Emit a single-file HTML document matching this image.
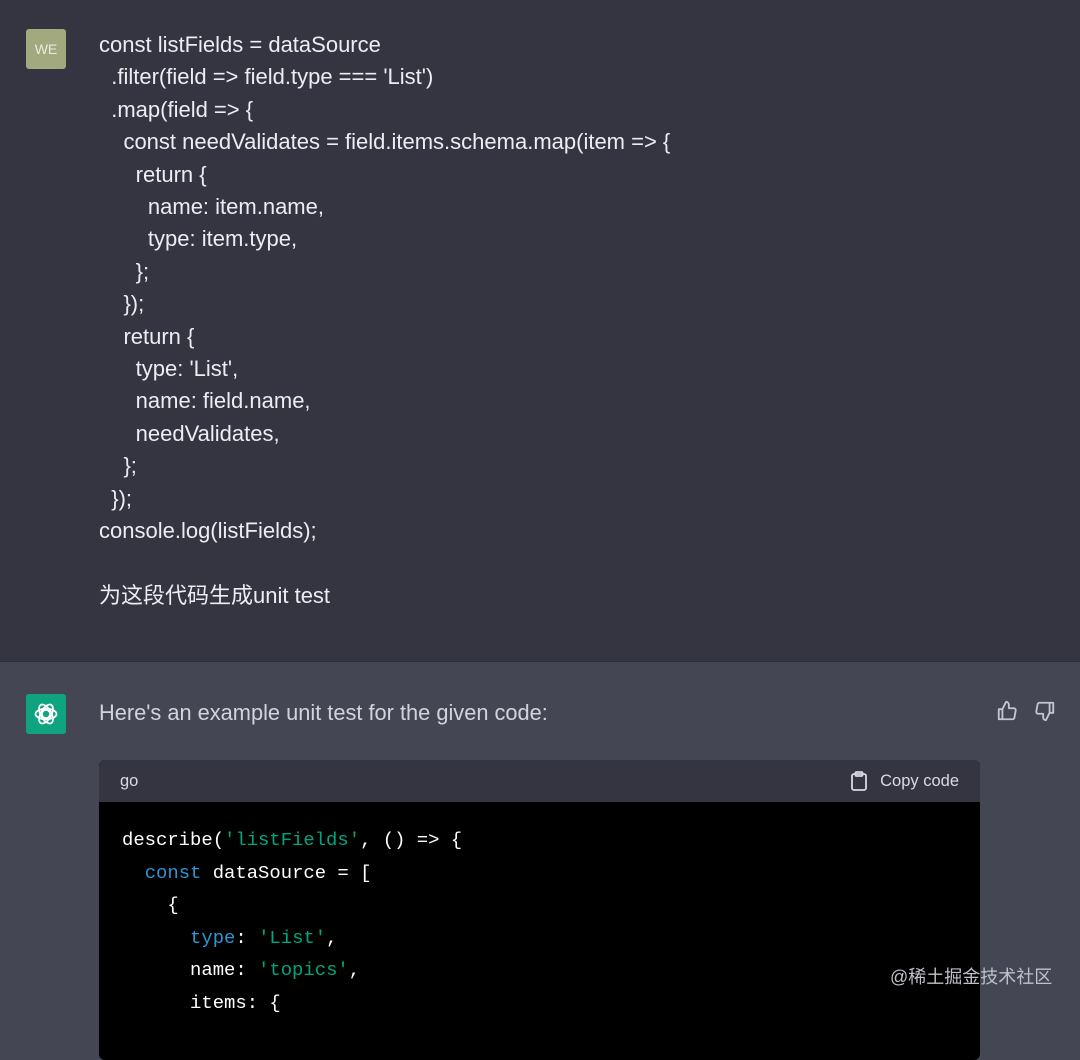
<!DOCTYPE html>
<html><head><meta charset="utf-8"><style>
body{margin:0;width:1080px;height:1013px;overflow:hidden;background:#444654;font-family:"Liberation Sans","Noto Sans CJK SC",sans-serif;position:relative}
.top{position:absolute;left:0;top:0;width:1080px;height:661px;background:#343541;border-bottom:1px solid #2d2e37}
.av{position:absolute;left:26px;top:29px;width:40px;height:40px;border-radius:3px;background:#a3a97e;color:#e8ebdc;font-size:14px;display:flex;align-items:center;justify-content:center}
.utext{position:absolute;left:99px;top:29px;color:#ececf1;font-size:22px;line-height:32.4px;white-space:pre;margin:0;font-family:inherit}
.gav{position:absolute;left:26px;top:694px;width:40px;height:40px;border-radius:3px;background:#10a37f;display:flex;align-items:center;justify-content:center}
.resp{position:absolute;left:99px;top:700px;color:#d1d5db;font-size:21.8px}
.code{position:absolute;left:99px;top:760px;width:881px;height:300px;border-radius:6px;overflow:hidden;background:#000}
.hd{height:42px;background:#343541;color:#d9d9e3;font-size:16.5px;display:flex;align-items:center;justify-content:space-between;padding:0 21px}
.bd{margin:0;padding:22px 23px;font-family:"Liberation Mono",monospace;font-size:18.9px;line-height:32.6px;color:#fff;white-space:pre}
.s{color:#00a67d}.k{color:#2e95d3}
.wm{position:absolute;left:890px;top:963px;color:#bfc1c8;font-size:18px}
</style></head><body>
<div class="top"></div>
<div class="av">WE</div>
<pre class="utext">const listFields = dataSource
  .filter(field => field.type === 'List')
  .map(field => {
    const needValidates = field.items.schema.map(item => {
      return {
        name: item.name,
        type: item.type,
      };
    });
    return {
      type: 'List',
      name: field.name,
      needValidates,
    };
  });
console.log(listFields);

为这段代码生成unit test</pre>
<div class="gav"><svg width="28" height="28" viewBox="0 0 24 24" fill="none" stroke="#fff" stroke-width="1.5"><circle cx="12" cy="12" r="3.5"/><ellipse cx="12" cy="12" rx="9" ry="4.5"/><ellipse cx="12" cy="12" rx="9" ry="4.5" transform="rotate(60 12 12)"/><ellipse cx="12" cy="12" rx="9" ry="4.5" transform="rotate(120 12 12)"/></svg></div>
<div class="resp">Here's an example unit test for the given code:</div>
<svg style="position:absolute;left:996px;top:700px" width="22" height="22" viewBox="0 0 24 24" fill="none" stroke="#c5c5d2" stroke-width="2" stroke-linejoin="round"><path d="M7 10v11H3V10h4zM7 10l4-8a3 3 0 0 1 3 3v4h5.5a2 2 0 0 1 2 2.3l-1.4 8A2 2 0 0 1 18 21H7"/></svg>
<svg style="position:absolute;left:1034px;top:700px" width="22" height="22" viewBox="0 0 24 24" fill="none" stroke="#c5c5d2" stroke-width="2" stroke-linejoin="round"><path d="M17 14V3h4v11h-4zM17 14l-4 8a3 3 0 0 1-3-3v-4H4.5a2 2 0 0 1-2-2.3l1.4-8A2 2 0 0 1 6 3h11"/></svg>
<div class="code"><div class="hd"><span>go</span><span style="display:flex;align-items:center;gap:12px"><svg width="18" height="20" viewBox="0 0 18 20" fill="none" stroke="#d9d9e3" stroke-width="1.8"><rect x="2" y="3" width="14" height="16" rx="2"/><rect x="5.5" y="1" width="7" height="4" rx="1"/></svg>Copy code</span></div>
<pre class="bd">describe(<span class="s">'listFields'</span>, () => {
  <span class="k">const</span> dataSource = [
    {
      <span class="k">type</span>: <span class="s">'List'</span>,
      name: <span class="s">'topics'</span>,
      items: {</pre></div>
<div class="wm">@稀土掘金技术社区</div>
</body></html>
